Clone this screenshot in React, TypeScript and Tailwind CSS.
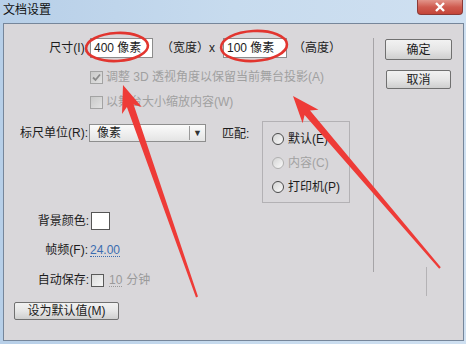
const font = { fontFamily: '"Liberation Sans", "Noto Sans CJK SC", sans-serif' };

function arrowPoints(tx: number, ty: number, ex: number, ey: number) {
  const dx = ex - tx;
  const dy = ey - ty;
  const len = Math.hypot(dx, dy);
  const ux = dx / len;
  const uy = dy / len;
  const nx = -uy;
  const ny = ux;
  const p = (d: number, w: number) => `${(tx + ux * d + nx * w).toFixed(1)},${(ty + uy * d + ny * w).toFixed(1)}`;
  return [
    p(0, 0),
    p(27, 10.5),
    p(22, 3.6),
    p(len, 1.1),
    p(len, -1.1),
    p(22, -3.6),
    p(27, -10.5),
  ].join(" ");
}

function Checkbox({ checked, disabled }: { checked?: boolean; disabled?: boolean }) {
  return (
    <div
      className={
        "w-[13px] h-[13px] border flex items-center justify-center " +
        (disabled ? "border-[#a3a3a3] bg-gradient-to-br from-[#c9c9c9] to-[#e2e2e2]" : "border-[#5a5a5a] bg-gradient-to-br from-[#dcdcdc] to-[#f6f6f6]")
      }
    >
      {checked && (
        <svg width="11" height="11" viewBox="0 0 11 11">
          <polyline points="2,5.5 4.5,8 9,2.5" fill="none" stroke="#8a8a8a" strokeWidth="1.8" />
        </svg>
      )}
    </div>
  );
}

function Radio({ label, disabled }: { label: string; disabled?: boolean }) {
  return (
    <div className="flex items-center h-[16px]">
      <div
        className={
          "w-[12px] h-[12px] rounded-full border bg-gradient-to-br from-[#d4d4d4] to-[#fafafa] " +
          (disabled ? "border-[#b0b0b0]" : "border-[#4a4a4a]")
        }
      />
      <span className={"ml-[4px] text-[12px] " + (disabled ? "text-[#a2a2a2]" : "text-[#1c1c1c]")}>{label}</span>
    </div>
  );
}

function Button({ label, className }: { label: string; className?: string }) {
  return (
    <div
      className={
        "flex items-center justify-center border border-[#707070] rounded-[2px] bg-gradient-to-b from-[#f2f2f2] via-[#e6e6e6] to-[#cfcfcf] text-[12px] text-[#1c1c1c] " +
        (className ?? "")
      }
    >
      {label}
    </div>
  );
}

export default function App() {
  return (
    <div style={font} className="relative w-[466px] h-[344px] overflow-hidden bg-gradient-to-r from-[#b7cfe8] via-[#c7dbee] to-[#cfe0f1] leading-none">
      <div className="h-[23px] flex items-start">
        <span className="ml-[3px] mt-[4px] text-[12px] text-[#111]">文档设置</span>
        <div className="ml-auto mr-[3px] w-[46px] h-[15px] rounded-b-[4px] border border-t-0 border-[#8b3a36] bg-gradient-to-b from-[#e2948a] via-[#cf5b50] to-[#c44538] flex items-center justify-center">
          <svg width="12" height="10" viewBox="0 0 12 10">
            <path d="M2 1 L10 9 M10 1 L2 9" stroke="#ffffff" strokeWidth="2.4" />
          </svg>
        </div>
      </div>

      <div className="ml-[3px] w-[461px] h-[318px] border border-[#76869a] bg-[#d9d7da] flex text-[12px] text-[#1c1c1c]">
        <div className="w-[369px] flex flex-col">
          <div className="mt-[14px] h-[20px] flex items-center">
            <div className="w-[84px] text-right">尺寸(I):</div>
            <div className="ml-[2px] w-[63px] h-[20px] bg-white border border-[#8c8c8c] flex items-center pl-[3px]">400 像素</div>
            <span className="ml-[8px]">（宽度）x</span>
            <div className="ml-[8px] w-[64px] h-[20px] bg-white border border-[#8c8c8c] flex items-center pl-[3px]">100 像素</div>
            <span className="ml-[6px]">（高度）</span>
          </div>

          <div className="mt-[11px] h-[16px] flex items-center pl-[86px] text-[#a0a0a0]">
            <Checkbox checked disabled />
            <span className="ml-[3px]">调整 3D 透视角度以保留当前舞台投影(A)</span>
          </div>

          <div className="mt-[9px] h-[16px] flex items-center pl-[86px] text-[#a0a0a0]">
            <Checkbox disabled />
            <span className="ml-[3px]">以舞台大小缩放内容(W)</span>
          </div>

          <div className="mt-[11px] h-[82px] flex items-start">
            <div className="w-[84px] text-right mt-[6px]">标尺单位(R):</div>
            <div className="ml-[1px] mt-[3px] w-[117px] h-[18px] border border-[#8e8e8e] bg-gradient-to-b from-[#fbfbfb] to-[#e4e4e4] flex items-center">
              <span className="ml-[7px] flex-1">像素</span>
              <div className="w-px h-[14px] bg-[#9a9a9a]" />
              <span className="w-[15px] text-center text-[9px] text-[#333]">▼</span>
            </div>
            <div className="ml-[16px] mt-[7px] w-[33px]">匹配:</div>
            <div className="ml-[7px] w-[88px] h-[82px] border border-[#b3b1b4] pl-[9px] pt-[9px] flex flex-col gap-[8px]">
              <Radio label="默认(E)" />
              <Radio label="内容(C)" disabled />
              <Radio label="打印机(P)" />
            </div>
          </div>

          <div className="mt-[8px] h-[19px] flex items-center">
            <div className="w-[85px] text-right">背景颜色:</div>
            <div className="ml-[2px] w-[19px] h-[18px] bg-white border border-[#555]" />
          </div>

          <div className="mt-[11px] h-[18px] flex items-center">
            <div className="w-[84px] text-right">帧频(F):</div>
            <span className="ml-[2px] text-[#3b6db0] border-b border-dotted border-[#3b6db0]">24.00</span>
          </div>

          <div className="mt-[13px] h-[16px] flex items-center">
            <div className="w-[85px] text-right">自动保存:</div>
            <div className="ml-[2px]">
              <Checkbox />
            </div>
            <span className="ml-[5px] text-[#9a9a9a] border-b border-dotted border-[#9a9a9a]">10</span>
            <span className="ml-[4px] text-[#9a9a9a]">分钟</span>
          </div>

          <Button label="设为默认值(M)" className="mt-[14px] ml-[10px] w-[105px] h-[18px]" />
        </div>

        <div className="mt-[14px] w-px h-[234px] bg-[#a6a4a7]" />

        <div className="flex flex-col pl-[11px] pt-[15px]">
          <Button label="确定" className="w-[67px] h-[21px] border-[#4f4f4f]" />
          <Button label="取消" className="mt-[10px] ml-[1px] w-[65px] h-[19px]" />
        </div>
      </div>

      <div className="absolute left-[426px] top-[267px] w-px h-[29px] bg-[#b4b2b5]" />

      <svg className="absolute left-0 top-0" width="466" height="344" viewBox="0 0 466 344">
        <ellipse cx="117" cy="47" rx="31" ry="14" fill="none" stroke="#e2352f" strokeWidth="2.6" transform="rotate(-3 117 47)" />
        <ellipse cx="254" cy="46" rx="33" ry="15" fill="none" stroke="#e2352f" strokeWidth="2.6" transform="rotate(-3 254 46)" />
        <polygon points={arrowPoints(123, 85, 197, 297)} fill="#ee3b37" />
        <polygon points={arrowPoints(293, 96, 440, 268)} fill="#ee3b37" />
      </svg>
    </div>
  );
}
